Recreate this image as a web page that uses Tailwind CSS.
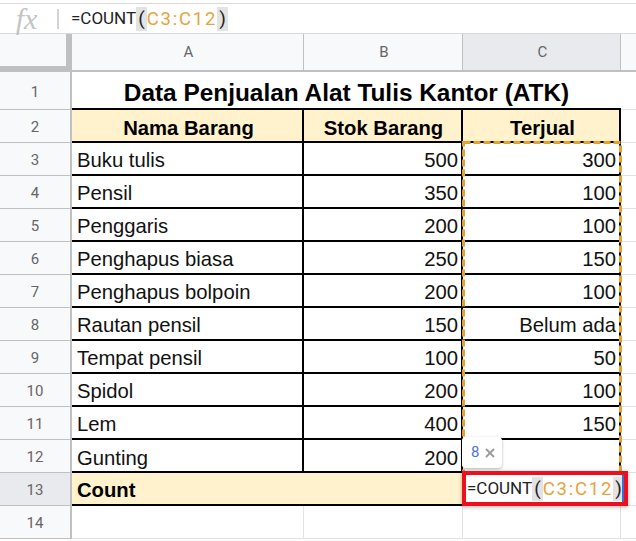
<!DOCTYPE html>
<html lang="en">
<head>
    <meta charset="UTF-8">
    <title>Data Penjualan ATK</title>
    <script src="https://cdn.jsdelivr.net/npm/@tailwindcss/browser@4"></script>
</head>
<body class="bg-white overflow-hidden">
    <div class="relative w-[636px] h-[541px] overflow-hidden font-['Liberation_Sans',sans-serif] text-[20.25px] text-[#111]">
        <!-- Formula bar -->
        <div class="mt-[3px] h-[31px] flex items-center border-t border-b border-[#d9d9d9]">
            <span class="w-[57px] pr-[4px] text-center font-['Liberation_Serif',serif] italic text-[30px] text-[#c4c4c4]">fx</span>
            <span class="w-[2px] h-[20px] bg-[#d4d4d4]"></span>
            <div class="ml-[12px] font-['Roboto',sans-serif] text-[17px] text-[#222] flex items-center">
                <span>=COUNT</span><span class="bg-[#e3e3e3] px-[2px] text-[19px] leading-[24px]">(</span><span class="text-[#e8a33d] text-[18.5px] leading-[24px] tracking-[1.8px]">C3:C12</span><span class="bg-[#e3e3e3] px-[2px] text-[19px] leading-[24px]">)</span>
            </div>
        </div>

        <!-- Column headers -->
        <div class="flex h-[38px] font-['Roboto',sans-serif] text-[15px] text-[#666] bg-[#f8f9fa] border-b-[2px] border-[#c0c0c0]">
            <div class="w-[72px] border-r-[6px] border-b-[4px] border-[#c0c0c0]"></div>
            <div class="w-[232px] flex items-center justify-center pl-[2px] pt-[1px] border-r border-[#c0c0c0]">A</div>
            <div class="w-[159px] flex items-center justify-center pl-[2px] pt-[1px] border-r border-[#c0c0c0]">B</div>
            <div class="w-[158px] flex items-center justify-center pl-[2px] pt-[1px] bg-[#e8eaed] border-r border-[#c0c0c0]">C</div>
            <div class="flex-1"></div>
        </div>

        <!-- Row 1 -->
        <div class="flex h-[38px]">
            <div class="w-[72px] shrink-0 flex items-center justify-center pt-[3px] bg-[#f8f9fa] border-r-[2px] border-b border-[#c0c0c0] font-['Roboto',sans-serif] text-[15px] text-[#666]">1</div>
            <div class="w-[549px] flex items-center justify-center pt-[6px] font-bold text-[24.4px] text-black border-b-[2px] border-black">Data Penjualan Alat Tulis Kantor (ATK)</div>
            <div class="flex-1 border-b border-[#e2e2e2]"></div>
        </div>

        <!-- Row 2 -->
        <div class="flex h-[33px]">
            <div class="w-[72px] shrink-0 flex items-center justify-center pt-[2px] bg-[#f8f9fa] border-r-[2px] border-b border-[#c0c0c0] font-['Roboto',sans-serif] text-[15px] text-[#666]">2</div>
            <div class="w-[232px] flex items-center justify-center pl-[3px] pt-[5px] font-bold bg-[#fff2cc] border-r-[2px] border-b-[2px] border-black text-black">Nama Barang</div>
            <div class="w-[159px] flex items-center justify-center pl-[2px] pt-[5px] font-bold bg-[#fff2cc] border-r-[2px] border-b-[2px] border-black text-black">Stok Barang</div>
            <div class="w-[158px] flex items-center justify-center pl-[3px] pt-[5px] font-bold bg-[#fff2cc] border-r-[2px] border-b-[2px] border-black text-black">Terjual</div>
            <div class="flex-1 border-b border-[#e2e2e2]"></div>
        </div>

        <!-- Rows 3 to 12 -->
        <div class="flex h-[33px]">
            <div class="w-[72px] shrink-0 flex items-center justify-center pt-[2px] bg-[#f8f9fa] border-r-[2px] border-b border-[#c0c0c0] font-['Roboto',sans-serif] text-[15px] text-[#666]">3</div>
            <div class="w-[232px] flex items-center pl-[5px] pt-[4px] border-r-[2px] border-b-[2px] border-black">Buku tulis</div>
            <div class="w-[159px] flex items-center justify-end pr-[3px] pt-[4px] border-r-[2px] border-b-[2px] border-black">500</div>
            <div class="w-[158px] flex items-center justify-end pr-[3px] pt-[4px] border-r-[2px] border-b-[2px] border-black">300</div>
            <div class="flex-1 border-b border-[#e2e2e2]"></div>
        </div>
        <div class="flex h-[33px]">
            <div class="w-[72px] shrink-0 flex items-center justify-center pt-[2px] bg-[#f8f9fa] border-r-[2px] border-b border-[#c0c0c0] font-['Roboto',sans-serif] text-[15px] text-[#666]">4</div>
            <div class="w-[232px] flex items-center pl-[5px] pt-[4px] border-r-[2px] border-b-[2px] border-black">Pensil</div>
            <div class="w-[159px] flex items-center justify-end pr-[3px] pt-[4px] border-r-[2px] border-b-[2px] border-black">350</div>
            <div class="w-[158px] flex items-center justify-end pr-[3px] pt-[4px] border-r-[2px] border-b-[2px] border-black">100</div>
            <div class="flex-1 border-b border-[#e2e2e2]"></div>
        </div>
        <div class="flex h-[33px]">
            <div class="w-[72px] shrink-0 flex items-center justify-center pt-[2px] bg-[#f8f9fa] border-r-[2px] border-b border-[#c0c0c0] font-['Roboto',sans-serif] text-[15px] text-[#666]">5</div>
            <div class="w-[232px] flex items-center pl-[5px] pt-[4px] border-r-[2px] border-b-[2px] border-black">Penggaris</div>
            <div class="w-[159px] flex items-center justify-end pr-[3px] pt-[4px] border-r-[2px] border-b-[2px] border-black">200</div>
            <div class="w-[158px] flex items-center justify-end pr-[3px] pt-[4px] border-r-[2px] border-b-[2px] border-black">100</div>
            <div class="flex-1 border-b border-[#e2e2e2]"></div>
        </div>
        <div class="flex h-[33px]">
            <div class="w-[72px] shrink-0 flex items-center justify-center pt-[2px] bg-[#f8f9fa] border-r-[2px] border-b border-[#c0c0c0] font-['Roboto',sans-serif] text-[15px] text-[#666]">6</div>
            <div class="w-[232px] flex items-center pl-[5px] pt-[4px] border-r-[2px] border-b-[2px] border-black">Penghapus biasa</div>
            <div class="w-[159px] flex items-center justify-end pr-[3px] pt-[4px] border-r-[2px] border-b-[2px] border-black">250</div>
            <div class="w-[158px] flex items-center justify-end pr-[3px] pt-[4px] border-r-[2px] border-b-[2px] border-black">150</div>
            <div class="flex-1 border-b border-[#e2e2e2]"></div>
        </div>
        <div class="flex h-[33px]">
            <div class="w-[72px] shrink-0 flex items-center justify-center pt-[2px] bg-[#f8f9fa] border-r-[2px] border-b border-[#c0c0c0] font-['Roboto',sans-serif] text-[15px] text-[#666]">7</div>
            <div class="w-[232px] flex items-center pl-[5px] pt-[4px] border-r-[2px] border-b-[2px] border-black">Penghapus bolpoin</div>
            <div class="w-[159px] flex items-center justify-end pr-[3px] pt-[4px] border-r-[2px] border-b-[2px] border-black">200</div>
            <div class="w-[158px] flex items-center justify-end pr-[3px] pt-[4px] border-r-[2px] border-b-[2px] border-black">100</div>
            <div class="flex-1 border-b border-[#e2e2e2]"></div>
        </div>
        <div class="flex h-[33px]">
            <div class="w-[72px] shrink-0 flex items-center justify-center pt-[2px] bg-[#f8f9fa] border-r-[2px] border-b border-[#c0c0c0] font-['Roboto',sans-serif] text-[15px] text-[#666]">8</div>
            <div class="w-[232px] flex items-center pl-[5px] pt-[4px] border-r-[2px] border-b-[2px] border-black">Rautan pensil</div>
            <div class="w-[159px] flex items-center justify-end pr-[3px] pt-[4px] border-r-[2px] border-b-[2px] border-black">150</div>
            <div class="w-[158px] flex items-center justify-end pr-[3px] pt-[4px] border-r-[2px] border-b-[2px] border-black">Belum ada</div>
            <div class="flex-1 border-b border-[#e2e2e2]"></div>
        </div>
        <div class="flex h-[33px]">
            <div class="w-[72px] shrink-0 flex items-center justify-center pt-[2px] bg-[#f8f9fa] border-r-[2px] border-b border-[#c0c0c0] font-['Roboto',sans-serif] text-[15px] text-[#666]">9</div>
            <div class="w-[232px] flex items-center pl-[5px] pt-[4px] border-r-[2px] border-b-[2px] border-black">Tempat pensil</div>
            <div class="w-[159px] flex items-center justify-end pr-[3px] pt-[4px] border-r-[2px] border-b-[2px] border-black">100</div>
            <div class="w-[158px] flex items-center justify-end pr-[3px] pt-[4px] border-r-[2px] border-b-[2px] border-black">50</div>
            <div class="flex-1 border-b border-[#e2e2e2]"></div>
        </div>
        <div class="flex h-[33px]">
            <div class="w-[72px] shrink-0 flex items-center justify-center pt-[2px] bg-[#f8f9fa] border-r-[2px] border-b border-[#c0c0c0] font-['Roboto',sans-serif] text-[15px] text-[#666]">10</div>
            <div class="w-[232px] flex items-center pl-[5px] pt-[4px] border-r-[2px] border-b-[2px] border-black">Spidol</div>
            <div class="w-[159px] flex items-center justify-end pr-[3px] pt-[4px] border-r-[2px] border-b-[2px] border-black">200</div>
            <div class="w-[158px] flex items-center justify-end pr-[3px] pt-[4px] border-r-[2px] border-b-[2px] border-black">100</div>
            <div class="flex-1 border-b border-[#e2e2e2]"></div>
        </div>
        <div class="flex h-[33px]">
            <div class="w-[72px] shrink-0 flex items-center justify-center pt-[2px] bg-[#f8f9fa] border-r-[2px] border-b border-[#c0c0c0] font-['Roboto',sans-serif] text-[15px] text-[#666]">11</div>
            <div class="w-[232px] flex items-center pl-[5px] pt-[4px] border-r-[2px] border-b-[2px] border-black">Lem</div>
            <div class="w-[159px] flex items-center justify-end pr-[3px] pt-[4px] border-r-[2px] border-b-[2px] border-black">400</div>
            <div class="w-[158px] flex items-center justify-end pr-[3px] pt-[4px] border-r-[2px] border-b-[2px] border-black">150</div>
            <div class="flex-1 border-b border-[#e2e2e2]"></div>
        </div>
        <div class="flex h-[33px]">
            <div class="w-[72px] shrink-0 flex items-center justify-center pt-[2px] bg-[#f8f9fa] border-r-[2px] border-b border-[#c0c0c0] font-['Roboto',sans-serif] text-[15px] text-[#666]">12</div>
            <div class="w-[232px] flex items-center pl-[5px] pt-[6px] border-r-[2px] border-b-[2px] border-black">Gunting</div>
            <div class="w-[159px] flex items-center justify-end pr-[3px] pt-[6px] border-r-[2px] border-b-[2px] border-black">200</div>
            <div class="w-[158px] border-r-[2px] border-b-[2px] border-black"></div>
            <div class="flex-1 border-b border-[#e2e2e2]"></div>
        </div>

        <!-- Row 13 -->
        <div class="flex h-[33px]">
            <div class="w-[72px] shrink-0 flex items-center justify-center pt-[2px] bg-[#e8eaed] border-r-[2px] border-b border-[#c0c0c0] font-['Roboto',sans-serif] text-[15px] text-[#666]">13</div>
            <div class="w-[391px] flex items-center pl-[5px] pt-[4px] font-bold bg-[#fff2cc] border-b-[2px] border-black text-black">Count</div>
            <div class="w-[158px] border-b-[2px] border-black"></div>
            <div class="flex-1 border-b border-[#e2e2e2]"></div>
        </div>

        <!-- Row 14 -->
        <div class="flex h-[33px]">
            <div class="w-[72px] shrink-0 flex items-center justify-center pt-[2px] bg-[#f8f9fa] border-r-[2px] border-b border-[#c0c0c0] font-['Roboto',sans-serif] text-[15px] text-[#666]">14</div>
            <div class="w-[232px] border-r border-b border-[#e2e2e2]"></div>
            <div class="w-[159px] border-r border-b border-[#e2e2e2]"></div>
            <div class="w-[158px] border-r border-b border-[#e2e2e2]"></div>
            <div class="flex-1 border-b border-[#e2e2e2]"></div>
        </div>

        <!-- Copy range marker over C3:C12 -->
        <svg class="absolute left-[460px] top-[139px] w-[164px] h-[336px]" viewBox="0 0 164 336" fill="none">
            <rect x="3.5" y="3.5" width="157" height="330" stroke="#e69f32" stroke-width="3" stroke-dasharray="7 3"/>
        </svg>

        <!-- Count hint tooltip -->
        <div class="absolute left-[462px] top-[437px] w-[40px] h-[31px] flex items-center gap-[6px] pl-[9px] bg-white rounded-sm shadow-[0_1px_3px_rgba(0,0,0,0.3)] font-['Roboto',sans-serif] text-[15px]">
            <span class="text-[#4a75c9]">8</span>
            <svg class="w-[10px] h-[10px]" viewBox="0 0 10 10" fill="none" stroke="#9a9a9a" stroke-width="1.8"><path d="M1 1l8 8M9 1l-8 8"/></svg>
        </div>

        <!-- Active cell editor -->
        <div class="absolute left-[462px] top-[471px] w-[166px] h-[35px] flex items-center pl-[1px] bg-white border-[4px] border-[#ee0f1c] shadow-[0_1px_4px_rgba(0,0,0,0.3)] font-['Roboto',sans-serif] text-[17px] text-[#222]">
            <span>=COUNT</span><span class="bg-[#e3e3e3] px-[2px] text-[19px] leading-[24px]">(</span><span class="text-[#e8a33d] text-[18.5px] leading-[24px] tracking-[1.8px]">C3:C12</span><span class="bg-[#e3e3e3] px-[2px] text-[19px] leading-[24px]">)</span>
            <span class="absolute right-0 top-0 bottom-0 w-[2px] bg-[#3b6fd1]"></span>
        </div>
    </div>
</body>
</html>
